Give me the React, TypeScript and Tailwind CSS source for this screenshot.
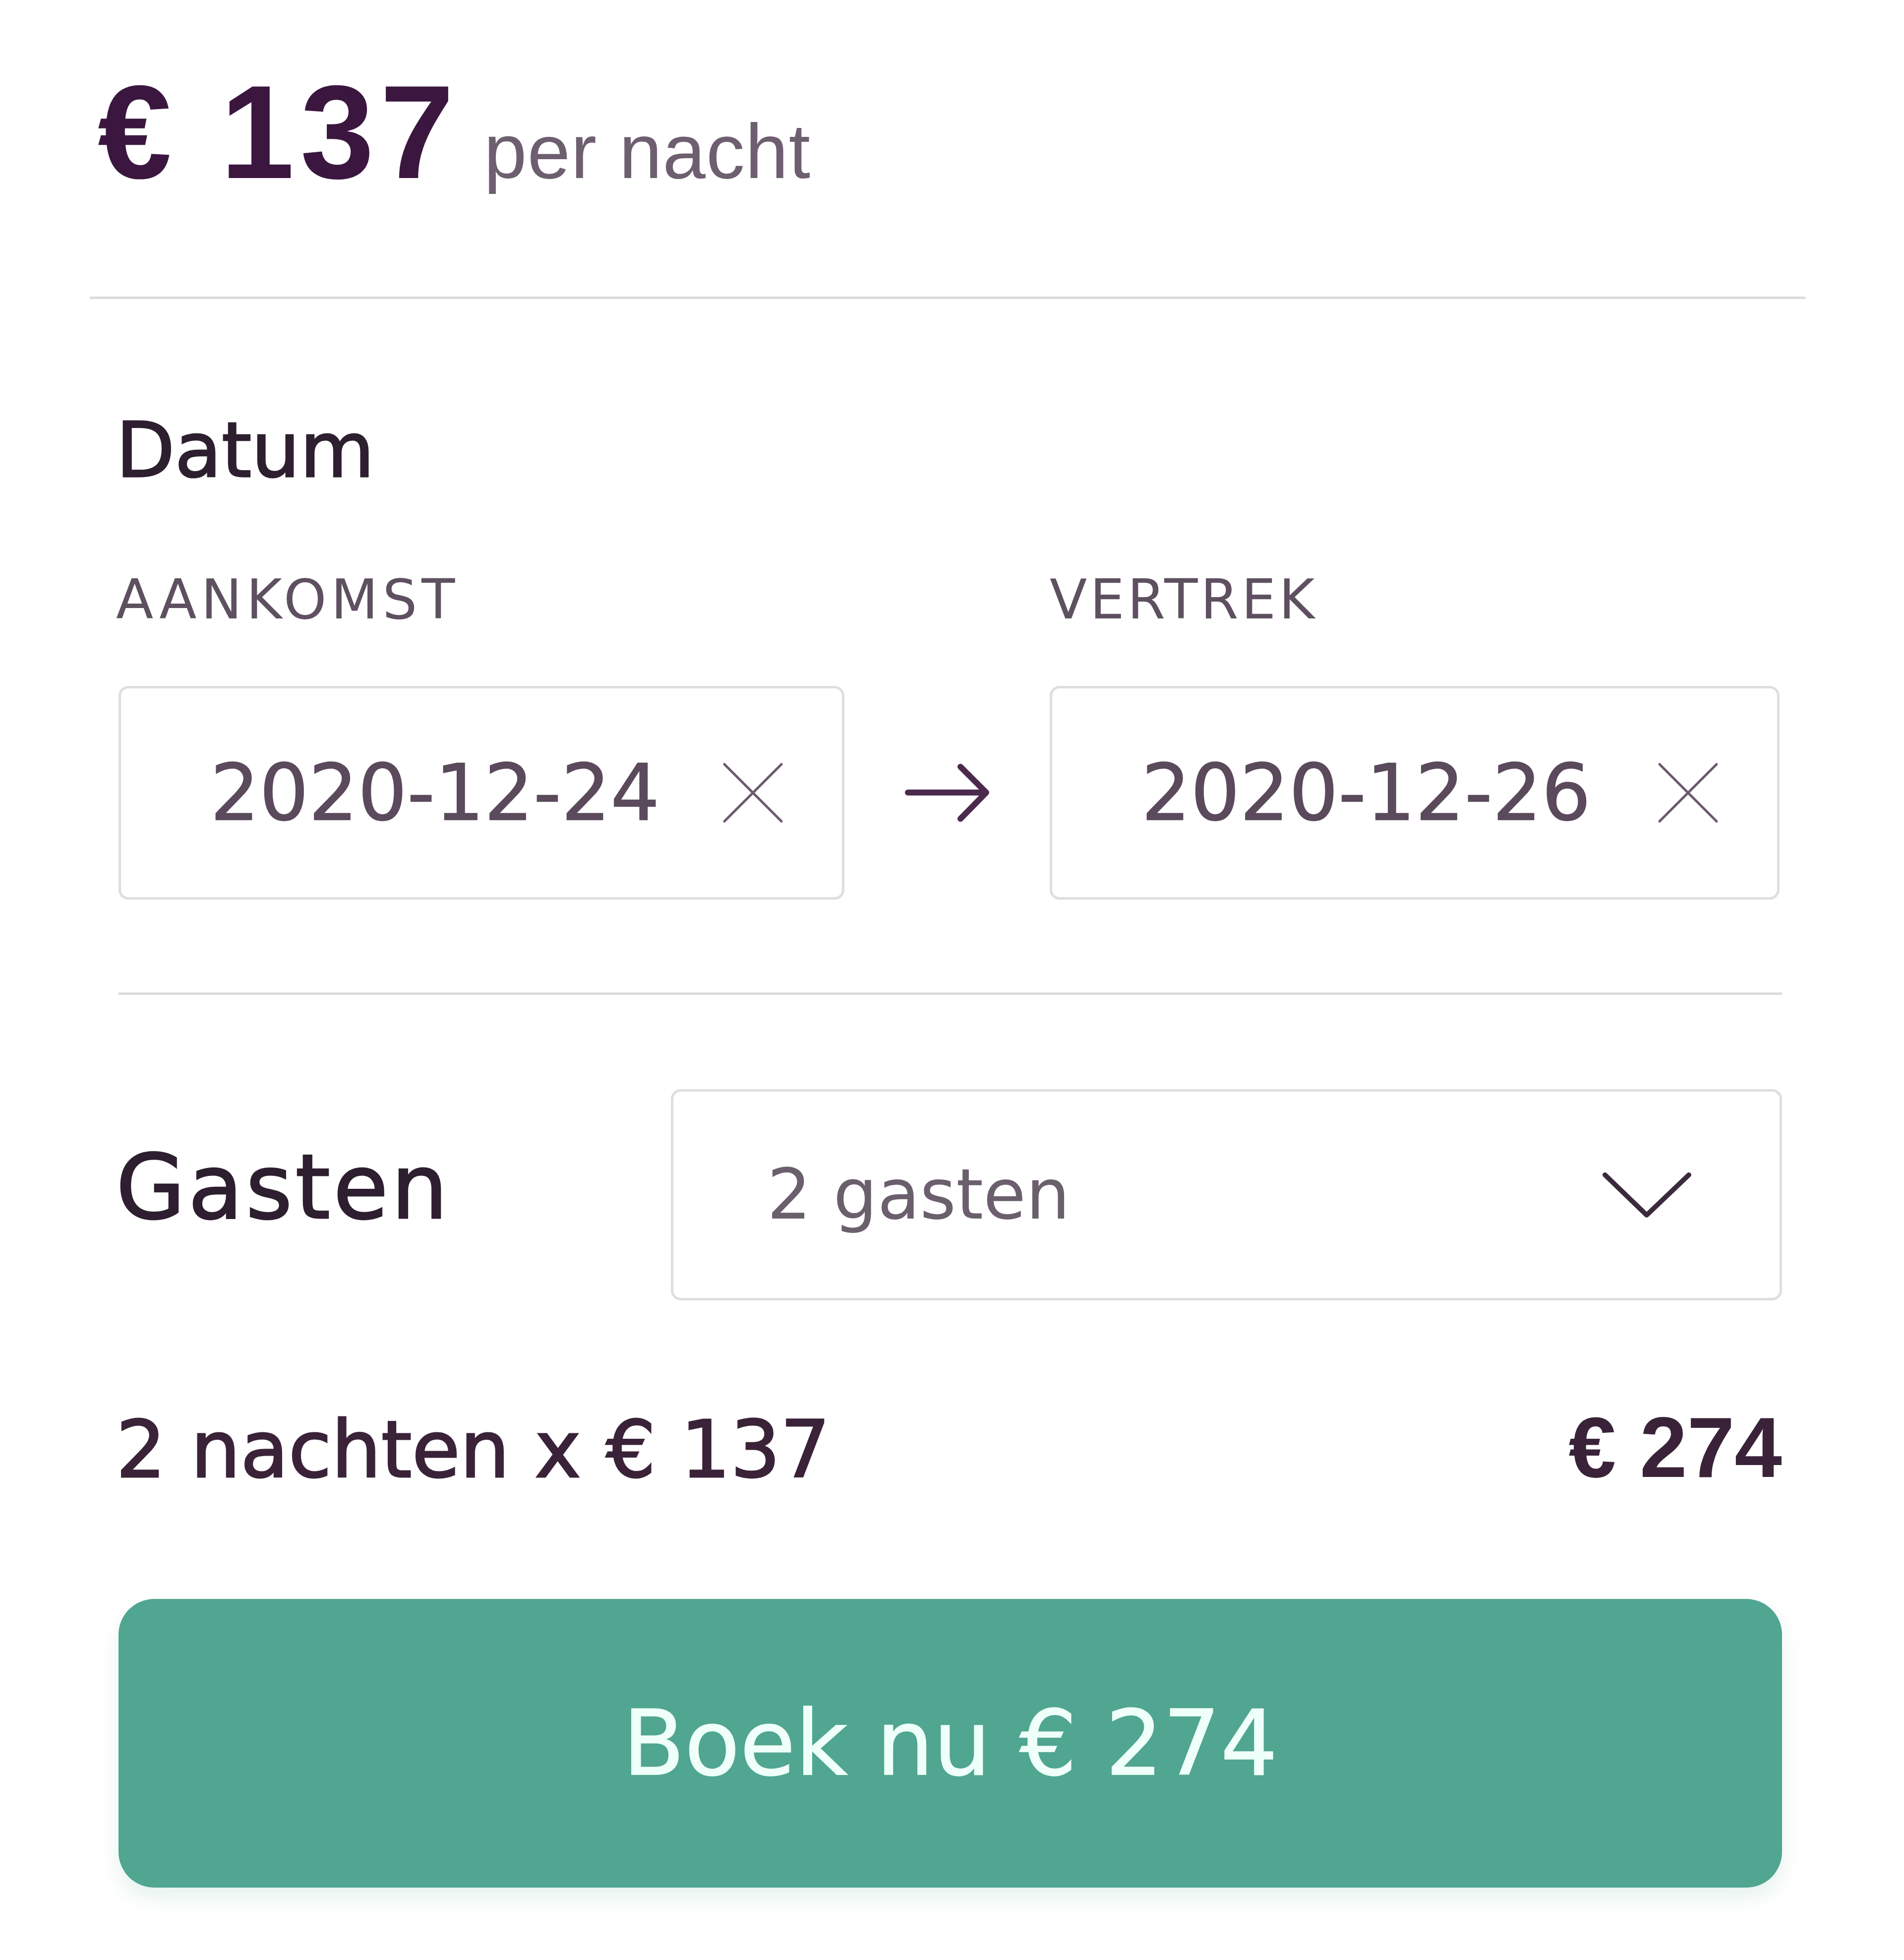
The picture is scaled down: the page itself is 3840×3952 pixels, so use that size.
import React from "react";

const sans = { fontFamily: '"Liberation Sans", Arial, sans-serif' };
const dv = { fontFamily: '"DejaVu Sans", "Liberation Sans", sans-serif' };

const ClearIcon = () => (
  <svg width="123" height="123" viewBox="0 0 123 123" fill="none">
    <path d="M4 4 L119 119 M119 4 L4 119" stroke="#6a5a6c" strokeWidth="5" strokeLinecap="round" />
  </svg>
);

const ArrowIcon = () => (
  <svg width="171" height="121" viewBox="0 0 171 121" fill="none">
    <path d="M6 60 H162 M112 8 L164 60 L112 113" stroke="#4b2a4d" strokeWidth="12" strokeLinecap="round" strokeLinejoin="round" />
  </svg>
);

const Chevron = () => (
  <svg width="181" height="93" viewBox="0 0 181 93" fill="none">
    <path d="M6 6 L90 87 L175 6" stroke="#3a2a3c" strokeWidth="10" strokeLinecap="round" strokeLinejoin="round" />
  </svg>
);

type DateBoxProps = {
  value: string;
};

const DateBox = ({ value }: DateBoxProps) => (
  <div className="flex h-[431px] items-center justify-between rounded-[20px] border-[5px] border-[#dedede] bg-white pl-[180px] pr-[118px]">
    <span className="text-[156px] leading-none text-[#5a4a5c] [-webkit-text-stroke:1.5px_#5a4a5c]" style={dv}>{value}</span>
    <ClearIcon />
  </div>
);

export default function App() {
  return (
    <div className="min-h-[3952px] w-[3840px] bg-white">
      <div className="ml-[181px] w-[3460px] pt-[132px]">
        <div className="flex items-baseline pl-[16px]">
          <span className="text-[268px] font-bold leading-none tracking-[12px] text-[#3b1740]" style={sans}>€ 137</span>
          <span className="ml-[48px] text-[156px] leading-none tracking-[1px] text-[#6e5f70]" style={sans}>per nacht</span>
        </div>
        <div className="mt-[198px] h-[5px] bg-[#dcdcdc]" />
      </div>

      <div className="ml-[234px] w-[3360px]">
        <div className="mt-[228px] text-[154px] leading-none text-[#2e1f30] [-webkit-text-stroke:3px_#2e1f30]" style={dv}>Datum</div>

        <div className="mt-[169px] grid grid-cols-[1469px_414px_1fr] gap-y-[119px]">
          <div className="text-[110px] leading-none tracking-[9px] text-[#5e5060]" style={dv}>AANKOMST</div>
          <div />
          <div className="text-[110px] leading-none tracking-[6px] text-[#5e5060]" style={dv}>VERTREK</div>

          <div className="pl-[5px]">
            <DateBox value="2020-12-24" />
          </div>
          <div className="flex items-center justify-center">
            <ArrowIcon />
          </div>
          <div className="pr-[5px]">
            <DateBox value="2020-12-26" />
          </div>
        </div>

        <div className="ml-[5px] mt-[187px] h-[5px] bg-[#dcdcdc]" />

        <div className="mt-[190px] flex items-center">
          <div className="mb-[30px] w-[1119px] text-[180px] leading-none tracking-[6px] text-[#2e1f30] [-webkit-text-stroke:3px_#2e1f30]" style={dv}>Gasten</div>
          <div className="flex h-[426px] flex-1 items-center justify-between rounded-[20px] border-[5px] border-[#dedede] pl-[189px] pr-[177px]">
            <span className="text-[140px] leading-none text-[#6b5f6d]" style={dv}>2 gasten</span>
            <Chevron />
          </div>
        </div>

        <div className="mt-[210px] flex items-baseline justify-between">
          <span className="text-[158px] leading-none text-[#3a2339] [-webkit-text-stroke:3px_#3a2339]" style={dv}>2 nachten x € 137</span>
          <span className="text-[172px] font-bold leading-none text-[#3a2339]" style={sans}>€ 274</span>
        </div>

        <button
          className="ml-[5px] mt-[220px] flex h-[582px] w-[3355px] items-center justify-center rounded-[72px] bg-[#50a690] shadow-[0_20px_40px_rgba(80,166,144,0.15)]"
        >
          <span className="text-[182px] leading-none text-[#effff9] [-webkit-text-stroke:1.5px_#effff9]" style={dv}>Boek nu € 274</span>
        </button>
      </div>
    </div>
  );
}
